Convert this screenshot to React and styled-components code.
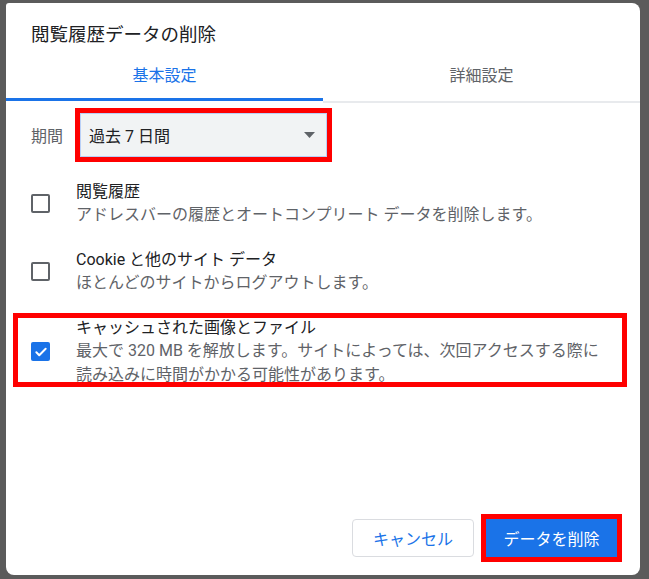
import React from 'react';
import styled, { createGlobalStyle } from 'styled-components';

const GlobalStyle = createGlobalStyle`
  html, body {
    margin: 0;
    padding: 0;
    background: #5b5b5b;
  }
  body {
    font-family: Roboto, "Noto Sans CJK JP", sans-serif;
  }
`;

const Page = styled.div`
  width: 649px;
  height: 579px;
  padding: 3px 0 0 6px;
  box-sizing: border-box;
  background: #5b5b5b;
  overflow: hidden;
`;

const Dialog = styled.div`
  width: 634px;
  height: 572px;
  background: #fff;
  border-radius: 3px 8px 8px 8px;
  display: flex;
  flex-direction: column;
  padding-top: 20px;
  box-sizing: border-box;
`;

const Title = styled.div`
  padding: 0 25px;
  font-size: 18.5px;
  line-height: 24px;
  color: #202124;
`;

const Tabs = styled.div`
  display: flex;
  align-items: flex-start;
  margin-top: 19px;
`;

const Tab = styled.div`
  flex: 1;
  text-align: center;
  font-size: 16px;
  line-height: 20px;
  color: ${p => (p.active ? '#1a73e8' : '#5f6368')};
  padding-bottom: ${p => (p.active ? '12px' : '15px')};
  border-bottom: ${p => (p.active ? '3px solid #1a73e8' : '2px solid #e8eaed')};
`;

const Body = styled.div`
  flex: 1;
  display: flex;
  flex-direction: column;
`;

const PeriodRow = styled.div`
  display: flex;
  align-items: center;
  padding: 0 25px;
  margin-top: 10px;
`;

const Label = styled.div`
  width: 49px;
  font-size: 16px;
  color: #5f6368;
`;

const Select = styled.div`
  width: 247px;
  height: 44px;
  box-sizing: border-box;
  display: flex;
  align-items: center;
  justify-content: space-between;
  padding: 0 11px 0 8px;
  background: #f1f3f4;
  border: 1px solid #b9d0f7;
  font-size: 16px;
  color: #202124;
  outline: ${p => (p.marked ? '5px solid #ff0000' : 'none')};
`;

const Options = styled.div`
  display: flex;
  flex-direction: column;
  gap: 21px;
  margin-top: 23px;
`;

const Row = styled.div`
  position: relative;
  display: flex;
  align-items: center;
  gap: 26px;
  padding: 0 25px;

  ${p => p.marked && `
    &::after {
      content: '';
      position: absolute;
      top: -3px;
      left: 7px;
      right: 13px;
      bottom: 0;
      border: 5px solid #ff0000;
      pointer-events: none;
    }
  `}
`;

const Box = styled.div`
  flex: none;
  width: 19px;
  height: 19px;
  box-sizing: border-box;
  border-radius: 2px;
  border: ${p => (p.checked ? 'none' : '2px solid #5f6368')};
  background: ${p => (p.checked ? '#1a73e8' : 'transparent')};
  display: flex;
  align-items: center;
  justify-content: center;
`;

const Text = styled.div`
  flex: 1;
  padding-right: 4px;
`;

const RowTitle = styled.div`
  font-size: 16px;
  line-height: 23px;
  color: #202124;
`;

const RowDesc = styled.div`
  font-size: 16px;
  line-height: 24px;
  color: #5f6368;
`;

const Footer = styled.div`
  display: flex;
  justify-content: flex-end;
  gap: 12px;
  padding: 0 23px 18px;
`;

const Button = styled.button`
  height: 38px;
  box-sizing: border-box;
  border-radius: ${p => (p.marked ? '0' : '4px')};
  font-family: Roboto, "Noto Sans CJK JP", sans-serif;
  font-size: 16px;
  cursor: pointer;
  padding: 0;
  width: ${p => (p.primary ? '131px' : '122px')};
  color: ${p => (p.primary ? '#fff' : '#1a73e8')};
  background: ${p => (p.primary ? '#1a73e8' : '#fff')};
  border: ${p => (p.primary ? 'none' : '1px solid #dadce0')};
  outline: ${p => (p.marked ? '5px solid #ff0000' : 'none')};
`;

function Checkbox({ checked }) {
  return (
    <Box checked={checked}>
      {checked && (
        <svg width="14" height="14" viewBox="0 0 24 24">
          <path d="M4 12.5l5 5L20 6.5" fill="none" stroke="#fff" strokeWidth="3.4" strokeLinecap="round" strokeLinejoin="round" />
        </svg>
      )}
    </Box>
  );
}

const options = [
  { title: '閲覧履歴', desc: 'アドレスバーの履歴とオートコンプリート データを削除します。' },
  { title: 'Cookie と他のサイト データ', desc: 'ほとんどのサイトからログアウトします。' },
  {
    title: 'キャッシュされた画像とファイル',
    desc: '最大で 320 MB を解放します。サイトによっては、次回アクセスする際に読み込みに時間がかかる可能性があります。',
    checked: true,
    marked: true,
  },
];

export default function App() {
  return (
    <Page>
      <GlobalStyle />
      <Dialog>
        <Title>閲覧履歴データの削除</Title>
        <Tabs>
          <Tab active>基本設定</Tab>
          <Tab>詳細設定</Tab>
        </Tabs>
        <Body>
          <PeriodRow>
            <Label>期間</Label>
            <Select marked>
              <span>過去 7 日間</span>
              <svg width="11" height="6" viewBox="0 0 11 6">
                <path d="M0 0h11L5.5 6z" fill="#5f6368" />
              </svg>
            </Select>
          </PeriodRow>
          <Options>
            {options.map(o => (
              <Row key={o.title} marked={o.marked}>
                <Checkbox checked={o.checked} />
                <Text>
                  <RowTitle>{o.title}</RowTitle>
                  <RowDesc>{o.desc}</RowDesc>
                </Text>
              </Row>
            ))}
          </Options>
        </Body>
        <Footer>
          <Button>キャンセル</Button>
          <Button primary marked>データを削除</Button>
        </Footer>
      </Dialog>
    </Page>
  );
}
